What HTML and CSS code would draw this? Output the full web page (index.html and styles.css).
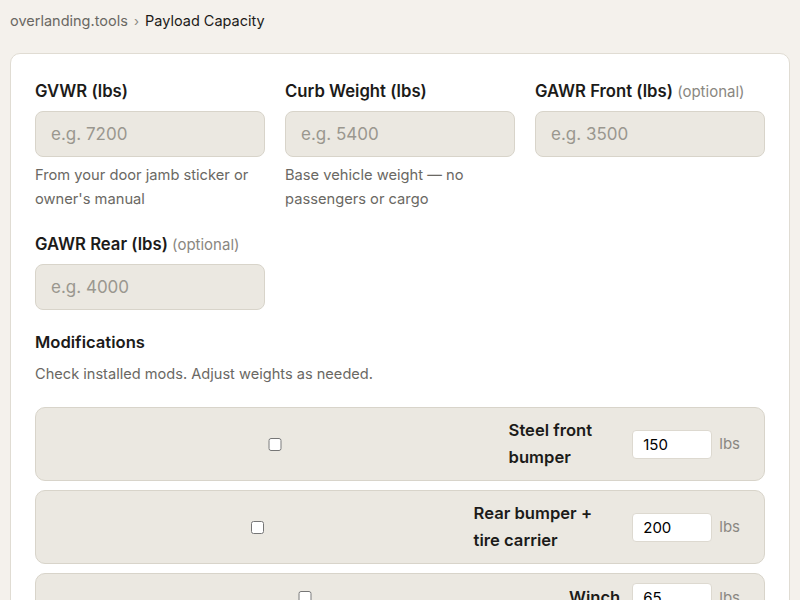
FILE: index.html
```html
<!DOCTYPE html>
<html lang="en">
<head>
  <meta charset="UTF-8" />
  <meta name="viewport" content="width=device-width, initial-scale=1.0"/>
  <title>Payload Capacity Calculator</title>
  <link rel="stylesheet" href="styles.css">
</head>
<body>
  <nav class="crumbs">
    <a href="#">overlanding.tools</a>
    <span class="sep">›</span>
    <span class="current">Payload Capacity</span>
  </nav>

  <main class="card">
    <div class="fields">
      <div class="field">
        <label for="gvwr">GVWR (lbs)</label>
        <input type="number" id="gvwr" placeholder="e.g. 7200" />
        <p class="hint">From your door jamb sticker or owner's manual</p>
      </div>
      <div class="field">
        <label for="curb">Curb Weight (lbs)</label>
        <input type="number" id="curb" placeholder="e.g. 5400" />
        <p class="hint">Base vehicle weight — no passengers or cargo</p>
      </div>
      <div class="field">
        <label for="gawrFront">GAWR Front (lbs) <span class="opt">(optional)</span></label>
        <input type="number" id="gawrFront" placeholder="e.g. 3500" />
      </div>
      <div class="field">
        <label for="gawrRear">GAWR Rear (lbs) <span class="opt">(optional)</span></label>
        <input type="number" id="gawrRear" placeholder="e.g. 4000" />
      </div>
    </div>

    <h2>Modifications</h2>
    <p class="sub">Check installed mods. Adjust weights as needed.</p>

    <div class="mods">
      <div class="mod">
        <input type="checkbox" id="mod1" />
        <label for="mod1">Steel front bumper</label>
        <input type="number" class="mod-weight" value="150" />
        <span class="unit">lbs</span>
      </div>
      <div class="mod">
        <input type="checkbox" id="mod2" />
        <label for="mod2">Rear bumper + tire carrier</label>
        <input type="number" class="mod-weight" value="200" />
        <span class="unit">lbs</span>
      </div>
      <div class="mod">
        <input type="checkbox" id="mod3" />
        <label for="mod3">Winch</label>
        <input type="number" class="mod-weight" value="65" />
        <span class="unit">lbs</span>
      </div>
      <div class="mod">
        <input type="checkbox" id="mod4" />
        <label for="mod4">Roof rack</label>
        <input type="number" class="mod-weight" value="90" />
        <span class="unit">lbs</span>
      </div>
    </div>
  </main>
</body>
</html>
```

FILE: styles.css
```css
:root {
  --bg: #f4f1ec;
  --card: #fff;
  --line: #e0dcd3;
  --field: #ebe8e1;
  --field-line: #d8d4ca;
  --text: #1c1b19;
  --muted: #6a6863;
  --faint: #8a8781;
}

body {
  margin: 0;
  padding: 0 10px;
  font-family: 'Inter', sans-serif;
  font-size: 16px;
  line-height: 1.7;
  background-color: var(--bg);
  color: var(--text);
}

.crumbs {
  padding: 9px 0 20px;
  font-size: 14.5px;
  line-height: 24px;
  color: var(--muted);
}

.crumbs a {
  color: var(--muted);
  text-decoration: none;
}

.crumbs .sep {
  margin: 0 2px;
  font-size: 13px;
  color: var(--faint);
}

.crumbs .current {
  color: var(--text);
}

.card {
  background: var(--card);
  border: 1px solid var(--line);
  border-radius: 10px;
  padding: 24px;
}

.fields {
  display: grid;
  grid-template-columns: repeat(3, 1fr);
  gap: 20px;
}

.field label {
  display: block;
  font-size: 16.7px;
  font-weight: 600;
  line-height: 27px;
  margin-bottom: 6px;
}

.field .opt {
  font-weight: 400;
  font-size: 15px;
  color: var(--faint);
}

input {
  width: 100%;
  box-sizing: border-box;
  font-family: inherit;
}

.field input {
  height: 46px;
  padding: 0 15px;
  font-size: 17px;
  background: var(--field);
  border: 1px solid var(--field-line);
  border-radius: 8px;
  color: var(--text);
}

.field input::placeholder {
  color: #9a978f;
}

.hint {
  margin: 6px 0 0;
  font-size: 14.7px;
  line-height: 24px;
  color: var(--muted);
}

h2 {
  margin: 20px 0 8px;
  font-size: 16.6px;
  font-weight: 600;
  line-height: 24px;
}

.sub {
  margin: 0 0 21px;
  font-size: 14.6px;
  line-height: 24px;
  color: var(--muted);
}

.mods {
  display: flex;
  flex-direction: column;
  gap: 9px;
}

.mod {
  display: flex;
  align-items: center;
  gap: 12px;
  padding: 9px 24px 9px 16px;
  background: var(--field);
  border: 1px solid var(--field-line);
  border-radius: 10px;
}

.mod label {
  flex-shrink: 0.7;
  font-size: 16.6px;
  font-weight: 600;
  line-height: 27px;
}

.mod .mod-weight {
  width: 80px;
  flex-shrink: 0;
  height: 29px;
  padding: 0 10px;
  font-size: 15px;
  background: #fff;
  border: 1px solid #ddd9d0;
  border-radius: 4px;
}

.unit {
  flex-shrink: 0;
  margin-left: -5px;
  font-size: 15px;
  color: var(--faint);
}
```
